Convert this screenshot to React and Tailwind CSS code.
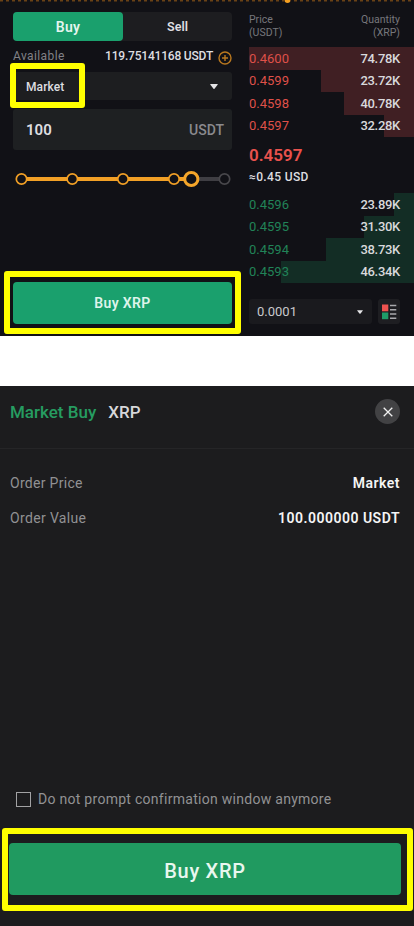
const asks = [
  { price: "0.4600", quantity: "74.78K", bar: "w-[165px]" },
  { price: "0.4599", quantity: "23.72K", bar: "w-[93px]" },
  { price: "0.4598", quantity: "40.78K", bar: "w-[70px]" },
  { price: "0.4597", quantity: "32.28K", bar: "w-[30px]" },
];

const bids = [
  { price: "0.4596", quantity: "23.89K", bar: "w-[20px]" },
  { price: "0.4595", quantity: "31.30K", bar: "w-[50px]" },
  { price: "0.4594", quantity: "38.73K", bar: "w-[88px]" },
  { price: "0.4593", quantity: "46.34K", bar: "w-[133px]" },
];

const Caret = ({ className = "h-[5px] w-2" }) => (
  <svg viewBox="0 0 8 5" className={className} fill="#e4e4e6">
    <path d="M0.6 0H7.4Q8 0.2 7.6 0.8L4.5 4.7Q4 5.2 3.5 4.7L0.4 0.8Q0 0.2 0.6 0Z" />
  </svg>
);

const Highlight = ({ className }) => (
  <div className={`pointer-events-none absolute rounded-[3px] border-[6px] border-[#ffff00] ${className}`} />
);

const BookRow = ({ row, priceColor, barColor }) => (
  <div className="relative flex h-[22.5px] items-center justify-between pr-3.5">
    <div className={`absolute inset-y-0 right-0 ${row.bar} ${barColor}`} />
    <span className={`relative text-[13px] ${priceColor}`}>{row.price}</span>
    <span className="relative text-[13px] font-medium tracking-[-0.3px] text-[#d9d9dc]">{row.quantity}</span>
  </div>
);

const AmountSlider = () => (
  <svg viewBox="0 0 219 18" className="mt-5 h-[18px] w-[219px]" fill="#111116">
    <path d="M8.5 9H178" stroke="#f2a026" strokeWidth="4" />
    <path d="M178 9H211" stroke="#3f3e43" strokeWidth="4" />
    {[8.5, 59.3, 110, 161].map((x) => (
      <circle key={x} cx={x} cy="9" r="5.2" stroke="#f2a026" strokeWidth="1.7" />
    ))}
    <circle cx="211.5" cy="9" r="5.2" stroke="#48474b" strokeWidth="1.7" />
    <circle cx="178.3" cy="9" r="6.6" stroke="#f5a62a" strokeWidth="3" />
  </svg>
);

const OrderForm = () => (
  <div className="flex w-[219px] flex-col">
    <div className="flex h-[29px] rounded bg-[#1d1d20]">
      <button className="w-[110px] rounded bg-[#1aa06d] pt-px text-[14px] font-semibold tracking-[0.3px] text-[#e4f5ee]">Buy</button>
      <button className="flex-1 pt-px text-[12.5px] font-semibold text-[#dedee0]">Sell</button>
    </div>

    <div className="mt-[5px] flex h-5 items-center text-[12px]">
      <span className="tracking-[0.4px] text-[#818187]">Available</span>
      <span className="ml-auto font-medium tracking-[-0.2px] text-[#dedee0]">119.75141168 USDT</span>
      <svg viewBox="0 0 14 14" className="mt-[3px] ml-[5px] h-3.5 w-3.5" fill="none" stroke="#b9781f" strokeWidth="1.4">
        <circle cx="7" cy="7" r="6" />
        <path d="M7 4V10M4 7H10" />
      </svg>
    </div>

    <div className="relative mt-[6px] flex h-7 items-center justify-between rounded-[3px] bg-[#1d1e20] pr-3.5 pl-[13px]">
      <span className="pt-px text-[12px] font-medium tracking-[0.1px] text-[#dedee0]">Market</span>
      <Caret />
      <Highlight className="-top-[9px] -left-[3px] h-[45px] w-[75px]" />
    </div>

    <div className="mt-[9px] flex h-[41px] items-center justify-between rounded-[3px] bg-[#1e2022] pr-2 pl-[13px]">
      <span className="pt-0.5 text-[15px] font-semibold text-[#dedee0]">100</span>
      <span className="pt-0.5 text-[14px] font-medium text-[#8a8a8e]">USDT</span>
    </div>

    <AmountSlider />

    <div className="relative mt-[94px]">
      <button className="h-[42px] w-full rounded bg-[#1aa06d] text-[14px] font-semibold tracking-[0.35px] text-[#def4eb]">Buy XRP</button>
      <Highlight className="-top-[11px] -left-[9px] h-[63px] w-[237px]" />
    </div>
  </div>
);

const OrderBook = () => (
  <div className="ml-[17px] flex flex-1 flex-col">
    <div className="flex h-[35px] justify-between pt-px pr-3.5 text-[10.5px] leading-[13px] text-[#77777c]">
      <span>Price<br />(USDT)</span>
      <span className="text-right">Quantity<br />(XRP)</span>
    </div>
    {asks.map((row) => (
      <BookRow key={row.price} row={row} priceColor="text-[#df5049]" barColor="bg-[#401f23]" />
    ))}
    <div className="mt-[7px] text-[17px] leading-[22px] font-semibold text-[#e9524d]">0.4597</div>
    <div className="mt-[3px] mb-[8px] text-[12px] leading-[16px] font-medium tracking-[0.35px] text-[#dedee0]">≈0.45 USD</div>
    {bids.map((row) => (
      <BookRow key={row.price} row={row} priceColor="text-[#218358]" barColor="bg-[#132d25]" />
    ))}
    <div className="mt-[16px] flex gap-[6px]">
      <div className="flex h-[25px] w-[123px] items-center justify-between rounded-[3px] bg-[#1a1a1e] pr-[9px] pl-2">
        <span className="text-[13px] text-[#c9c9cc]">0.0001</span>
        <Caret className="h-1 w-1.5" />
      </div>
      <div className="flex h-[25px] w-[22px] items-center justify-center rounded-[3px] bg-[#1e1e22]">
        <svg viewBox="0 0 16 16" className="h-4 w-4">
          <path d="M1 0.5H7.3V7.3H1Z" fill="#ef5350" />
          <path d="M1 8.5H7.3V15.2H1Z" fill="#1f9c69" />
          <path d="M9 1.5H15.3M9 5.8H15.3M9 10H15.3M9 14.2H15.3" stroke="#a9a9ad" strokeWidth="1.6" />
        </svg>
      </div>
    </div>
  </div>
);

const TradePanel = () => (
  <section className="relative h-[336px] bg-[#111116]">
    <svg className="absolute inset-x-0 top-0 h-[3px] w-full">
      <path d="M0 0.75H414" stroke="#6a4216" strokeWidth="1.5" strokeDasharray="3 3" />
      <path d="M285 0H290V2Q287.5 4 285 2Z" fill="#f5a020" />
    </svg>
    <div className="flex pt-3 pl-[13px]">
      <OrderForm />
      <OrderBook />
    </div>
  </section>
);

const ConfirmPanel = () => (
  <section className="mt-[50px] flex h-[540px] flex-col bg-[#1c1c1e]">
    <header className="flex h-[63px] items-start justify-between border-b border-[#252527] pt-[13px] pr-[14px] pl-[10px]">
      <h2 className="flex gap-3 text-[17px] leading-[26px] font-medium">
        <span className="text-[#269c61]">Market Buy</span>
        <span className="text-[#d7d7d9]">XRP</span>
      </h2>
      <button className="flex h-[25px] w-[25px] items-center justify-center rounded-full bg-[#424244]">
        <svg viewBox="0 0 10 10" className="h-2.5 w-2.5" stroke="#f0f0f0" strokeWidth="1.3">
          <path d="M0.7 0.7L9.3 9.3M9.3 0.7L0.7 9.3" />
        </svg>
      </button>
    </header>

    <dl className="flex flex-col gap-[15px] pt-[24px] pr-[14px] pl-[10px] text-[14px] leading-5">
      <div className="flex justify-between">
        <dt className="tracking-[0.3px] text-[#919193]">Order Price</dt>
        <dd className="font-semibold tracking-[0.5px] text-[#f5f5f5]">Market</dd>
      </div>
      <div className="flex justify-between">
        <dt className="tracking-[0.35px] text-[#919193]">Order Value</dt>
        <dd className="font-semibold tracking-[0.5px] text-[#f5f5f5]">100.000000 USDT</dd>
      </div>
    </dl>

    <label className="mt-auto flex h-5 items-center pl-[16px] text-[14px] tracking-[0.28px] text-[#929294]">
      <span className="mr-[7px] h-[15px] w-[15px] border border-[#a2a2a4]" />
      Do not prompt confirmation window anymore
    </label>

    <div className="relative mt-[34px] mr-[13px] mb-[31px] ml-[9px]">
      <button className="h-[52px] w-full rounded bg-[#209a60] pt-[3px] text-[20px] font-medium tracking-[0.7px] text-[#e9f7ef]">Buy XRP</button>
      <Highlight className="-top-[15px] -left-[7px] h-[83px] w-[411px]" />
    </div>
  </section>
);

const App = () => (
  <main className="w-[414px] bg-white font-['Roboto','Liberation_Sans',sans-serif]">
    <TradePanel />
    <ConfirmPanel />
  </main>
);

export default App;
